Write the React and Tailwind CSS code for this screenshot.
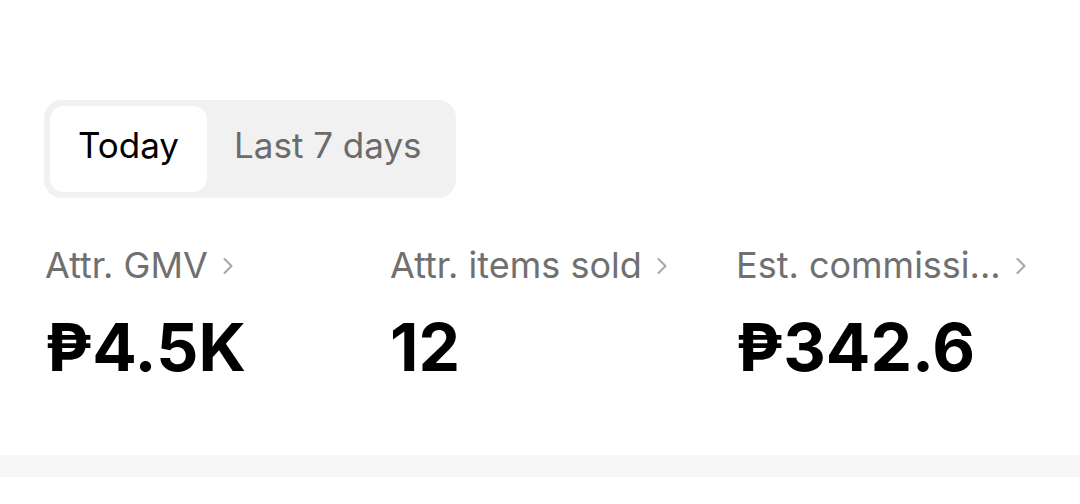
import { ChevronRight } from 'lucide-react'

const stats = [
  { label: 'Attr. GMV', value: '₱4.5K' },
  { label: 'Attr. items sold', value: '12' },
  { label: 'Est. commissi...', value: '₱342.6' },
]

export default function App() {
  return (
    <div className="h-[504px] w-[1080px] bg-white font-['Inter','Roboto',sans-serif]">
      <div className="h-[455px] px-[44px] pt-[100px]">
        <div className="inline-flex h-[98px] items-stretch rounded-[18px] bg-[#f1f1f1] p-[6px]">
          <div className="flex w-[157px] items-center justify-center rounded-[14px] bg-white pb-[8px] text-[35px] text-black">Today</div>
          <div className="flex items-center pb-[8px] pl-[27px] pr-[28px] text-[35px] text-[#6b6b6b]">Last 7 days</div>
        </div>

        <div className="mt-[47px] grid grid-cols-[345px_346px_1fr]">
          {stats.map((s) => (
            <div key={s.label} className="pl-[1px]">
              <div className="flex items-center gap-[6px] text-[36px] leading-[40px] text-[#707070]">
                <span className="whitespace-nowrap">{s.label}</span>
                <ChevronRight size={28} strokeWidth={1.8} className="mt-[2px] text-[#a8a8a8]" />
              </div>
              <div className="mt-[29px] text-[66px] font-bold leading-[66px] text-black">{s.value}</div>
            </div>
          ))}
        </div>
      </div>
      <div className="h-[22px] bg-[#f7f7f7]" />
    </div>
  )
}
